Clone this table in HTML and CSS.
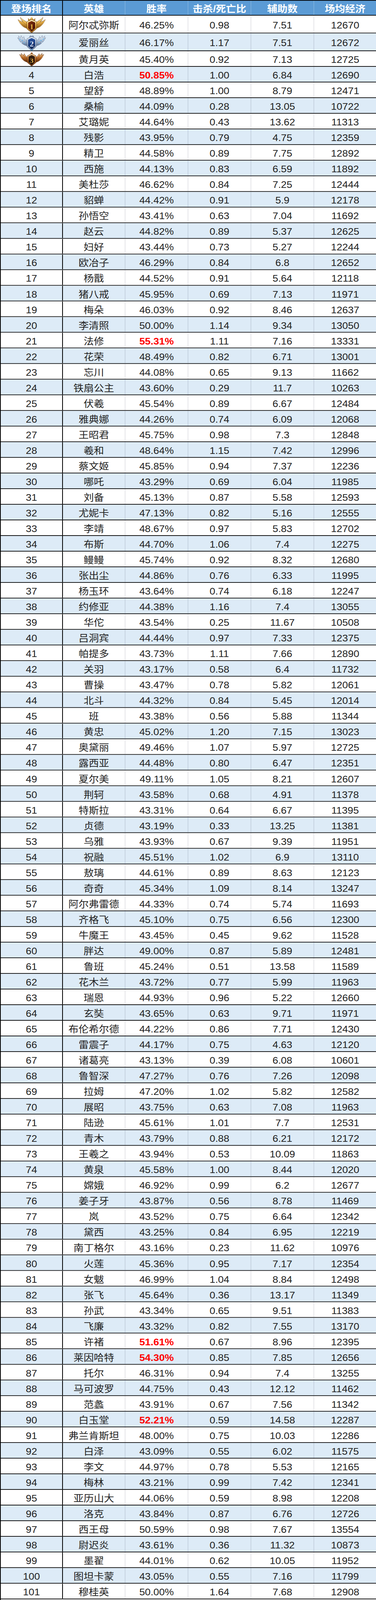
FILE: index.html
```html
<!DOCTYPE html>
<html lang="zh-CN">
<head>
<meta charset="utf-8">
<title>英雄数据排名</title>
<link rel="stylesheet" href="styles.css">
</head>
<body>
<div class="frame">
<div class="sheet">
  <div class="row head">
    <div class="c">登场排名</div><div class="c">英雄</div><div class="c">胜率</div><div class="c">击杀/死亡比</div><div class="c">辅助数</div><div class="c">场均经济</div>
  </div>
  <div class="rows">
    <div class="row tall"><div class="c medal-cell">
      <svg class="medal" viewBox="0 0 74 48" width="74" height="48">
        <defs>
          <linearGradient id="g1" x1="0" y1="0" x2="0" y2="1"><stop offset="0" stop-color="#fff6c8"/><stop offset=".45" stop-color="#e9b24a"/><stop offset="1" stop-color="#8a5312"/></linearGradient>
          <linearGradient id="g1s" x1="0" y1="0" x2="1" y2="1"><stop offset="0" stop-color="#8a3410"/><stop offset="1" stop-color="#3a0f04"/></linearGradient>
        </defs>
        <g>
          <path d="M27 34 C18 33 8 25 2 9 C7 13 11 15 15 16 C11 12 9 8 8 3 C14 9 18 12 22 14 L27 20 Z" fill="url(#g1)" stroke="#7a4a10" stroke-width=".8"/>
          <path d="M26 30 C18 28 12 22 7 14 M25 25 C19 22 15 17 12 10" fill="none" stroke="#8a5a14" stroke-width=".7"/>
        </g>
        <g transform="translate(74 0) scale(-1 1)">
          <path d="M27 34 C18 33 8 25 2 9 C7 13 11 15 15 16 C11 12 9 8 8 3 C14 9 18 12 22 14 L27 20 Z" fill="url(#g1)" stroke="#7a4a10" stroke-width=".8"/>
          <path d="M26 30 C18 28 12 22 7 14 M25 25 C19 22 15 17 12 10" fill="none" stroke="#8a5a14" stroke-width=".7"/>
        </g>
        <path d="M29 14 L28 6 L32.5 10 L37 1.5 L41.5 10 L46 6 L45 14 Z" fill="url(#g1)" stroke="#8a5a14" stroke-width=".8"/>
        <circle cx="37" cy="2.5" r="1.6" fill="#fff2b0"/>
        <path d="M37 9 L49.5 15 L49.5 35 L37 46.5 L24.5 35 L24.5 15 Z" fill="url(#g1)" stroke="#6a3a08" stroke-width=".9"/>
        <path d="M37 13 L46 17.5 L46 33.5 L37 42.5 L28 33.5 L28 17.5 Z" fill="url(#g1s)"/>
        <text x="37" y="36" text-anchor="middle" class="mnum" font-size="21" fill="#f6c453" stroke="#6a3a08" stroke-width=".6">1</text>
      </svg>
    </div><div class="c">阿尔忒弥斯</div><div class="c">46.25%</div><div class="c">0.98</div><div class="c">7.51</div><div class="c">12670</div></div>
    <div class="row tall"><div class="c medal-cell">
      <svg class="medal" viewBox="0 0 78 48" width="78" height="48">
        <defs>
          <linearGradient id="g2" x1="0" y1="0" x2="0" y2="1"><stop offset="0" stop-color="#f4f8fc"/><stop offset=".5" stop-color="#a9bdd4"/><stop offset="1" stop-color="#5a7090"/></linearGradient>
          <linearGradient id="g2s" x1="0" y1="0" x2="0" y2="1"><stop offset="0" stop-color="#2b58a8"/><stop offset="1" stop-color="#0d2250"/></linearGradient>
        </defs>
        <g>
          <path d="M28 33 C20 32 10 26 3 10 L7 12 L5 5 L11 10 L12 4 L16 11 L19 7 L21 14 L28 19 Z" fill="url(#g2)" stroke="#5a6f8e" stroke-width=".7"/>
          <circle cx="9" cy="14" r="1.5" fill="#4fb0f0"/><circle cx="15" cy="18" r="1.3" fill="#4fb0f0"/><circle cx="20" cy="24" r="1.3" fill="#6cc4ff"/><circle cx="13" cy="24" r="1.1" fill="#e8f4ff"/>
        </g>
        <g transform="translate(78 0) scale(-1 1)">
          <path d="M28 33 C20 32 10 26 3 10 L7 12 L5 5 L11 10 L12 4 L16 11 L19 7 L21 14 L28 19 Z" fill="url(#g2)" stroke="#5a6f8e" stroke-width=".7"/>
          <circle cx="9" cy="14" r="1.5" fill="#4fb0f0"/><circle cx="15" cy="18" r="1.3" fill="#4fb0f0"/><circle cx="20" cy="24" r="1.3" fill="#6cc4ff"/><circle cx="13" cy="24" r="1.1" fill="#e8f4ff"/>
        </g>
        <path d="M33 8 L36 3 L39 6 L42 3 L45 8 Z" fill="url(#g2)" stroke="#5a6f8e" stroke-width=".6"/>
        <path d="M39 7 L51 13 L51 35 L39 46.5 L27 35 L27 13 Z" fill="url(#g2)" stroke="#4a5a78" stroke-width=".9"/>
        <path d="M39 11 L48 15.5 L48 33.5 L39 42.5 L30 33.5 L30 15.5 Z" fill="url(#g2s)"/>
        <circle cx="39" cy="45" r="2" fill="#5ab8f5"/>
        <text x="39" y="35" text-anchor="middle" class="mnum" font-size="21" fill="#eef4ff" stroke="#5a7ab0" stroke-width=".5">2</text>
      </svg>
    </div><div class="c">爱丽丝</div><div class="c">46.17%</div><div class="c">1.17</div><div class="c">7.51</div><div class="c">12672</div></div>
    <div class="row"><div class="c medal-cell">
      <svg class="medal" viewBox="0 0 66 40" width="66" height="40">
        <defs>
          <linearGradient id="g3" x1="0" y1="0" x2="0" y2="1"><stop offset="0" stop-color="#ffdca6"/><stop offset=".5" stop-color="#c0702a"/><stop offset="1" stop-color="#5a2a08"/></linearGradient>
          <linearGradient id="g3s" x1="0" y1="0" x2="0" y2="1"><stop offset="0" stop-color="#3a2414"/><stop offset="1" stop-color="#140a04"/></linearGradient>
        </defs>
        <g>
          <path d="M23 28 C15 27 7 20 2 6 L7 9 L6 3 L12 9 L14 4 L18 11 L23 15 Z" fill="url(#g3)" stroke="#5a2a08" stroke-width=".8"/>
          <path d="M22 24 C15 22 10 16 7 10 M22 19 C17 17 14 13 12 8" fill="none" stroke="#6a3510" stroke-width=".7"/>
        </g>
        <g transform="translate(66 0) scale(-1 1)">
          <path d="M23 28 C15 27 7 20 2 6 L7 9 L6 3 L12 9 L14 4 L18 11 L23 15 Z" fill="url(#g3)" stroke="#5a2a08" stroke-width=".8"/>
          <path d="M22 24 C15 22 10 16 7 10 M22 19 C17 17 14 13 12 8" fill="none" stroke="#6a3510" stroke-width=".7"/>
        </g>
        <circle cx="33" cy="3" r="2.4" fill="url(#g3)" stroke="#5a2a08" stroke-width=".6"/>
        <path d="M33 4 L44 10 L44 29 L33 39 L22 29 L22 10 Z" fill="url(#g3)" stroke="#4a2206" stroke-width=".9"/>
        <path d="M33 8 L41 12 L41 27.5 L33 35.5 L25 27.5 L25 12 Z" fill="url(#g3s)"/>
        <text x="33" y="30" text-anchor="middle" class="mnum" font-size="19" fill="#f2c458" stroke="#6a4010" stroke-width=".5">3</text>
      </svg>
    </div><div class="c">黄月英</div><div class="c">45.40%</div><div class="c">0.92</div><div class="c">7.13</div><div class="c">12725</div></div>
    <div class="row"><div class="c">4</div><div class="c">白浩</div><div class="c hot">50.85%</div><div class="c">1.00</div><div class="c">6.84</div><div class="c">12690</div></div>
    <div class="row"><div class="c">5</div><div class="c">望舒</div><div class="c">48.89%</div><div class="c">1.00</div><div class="c">8.79</div><div class="c">12471</div></div>
    <div class="row"><div class="c">6</div><div class="c">桑榆</div><div class="c">44.09%</div><div class="c">0.28</div><div class="c">13.05</div><div class="c">10722</div></div>
    <div class="row"><div class="c">7</div><div class="c">艾璐妮</div><div class="c">44.64%</div><div class="c">0.43</div><div class="c">13.62</div><div class="c">11313</div></div>
    <div class="row"><div class="c">8</div><div class="c">残影</div><div class="c">43.95%</div><div class="c">0.79</div><div class="c">4.75</div><div class="c">12359</div></div>
    <div class="row"><div class="c">9</div><div class="c">精卫</div><div class="c">44.58%</div><div class="c">0.89</div><div class="c">7.75</div><div class="c">12892</div></div>
    <div class="row"><div class="c">10</div><div class="c">西施</div><div class="c">44.13%</div><div class="c">0.83</div><div class="c">6.59</div><div class="c">11892</div></div>
    <div class="row"><div class="c">11</div><div class="c">美杜莎</div><div class="c">46.62%</div><div class="c">0.84</div><div class="c">7.25</div><div class="c">12444</div></div>
    <div class="row"><div class="c">12</div><div class="c">貂蝉</div><div class="c">44.42%</div><div class="c">0.91</div><div class="c">5.9</div><div class="c">12178</div></div>
    <div class="row"><div class="c">13</div><div class="c">孙悟空</div><div class="c">43.41%</div><div class="c">0.63</div><div class="c">7.04</div><div class="c">11692</div></div>
    <div class="row"><div class="c">14</div><div class="c">赵云</div><div class="c">44.82%</div><div class="c">0.89</div><div class="c">5.37</div><div class="c">12625</div></div>
    <div class="row"><div class="c">15</div><div class="c">妇好</div><div class="c">43.44%</div><div class="c">0.73</div><div class="c">5.27</div><div class="c">12244</div></div>
    <div class="row"><div class="c">16</div><div class="c">欧冶子</div><div class="c">46.29%</div><div class="c">0.84</div><div class="c">6.8</div><div class="c">12652</div></div>
    <div class="row"><div class="c">17</div><div class="c">杨戬</div><div class="c">44.52%</div><div class="c">0.91</div><div class="c">5.64</div><div class="c">12118</div></div>
    <div class="row"><div class="c">18</div><div class="c">猪八戒</div><div class="c">45.95%</div><div class="c">0.69</div><div class="c">7.13</div><div class="c">11971</div></div>
    <div class="row"><div class="c">19</div><div class="c">梅朵</div><div class="c">46.03%</div><div class="c">0.92</div><div class="c">8.46</div><div class="c">12637</div></div>
    <div class="row"><div class="c">20</div><div class="c">李清照</div><div class="c">50.00%</div><div class="c">1.14</div><div class="c">9.34</div><div class="c">13050</div></div>
    <div class="row"><div class="c">21</div><div class="c">法修</div><div class="c hot">55.31%</div><div class="c">1.11</div><div class="c">7.16</div><div class="c">13331</div></div>
    <div class="row"><div class="c">22</div><div class="c">花荣</div><div class="c">48.49%</div><div class="c">0.82</div><div class="c">6.71</div><div class="c">13001</div></div>
    <div class="row"><div class="c">23</div><div class="c">忘川</div><div class="c">44.08%</div><div class="c">0.65</div><div class="c">9.13</div><div class="c">11662</div></div>
    <div class="row"><div class="c">24</div><div class="c">铁扇公主</div><div class="c">43.60%</div><div class="c">0.29</div><div class="c">11.7</div><div class="c">10263</div></div>
    <div class="row"><div class="c">25</div><div class="c">伏羲</div><div class="c">45.54%</div><div class="c">0.89</div><div class="c">6.67</div><div class="c">12484</div></div>
    <div class="row"><div class="c">26</div><div class="c">雅典娜</div><div class="c">44.26%</div><div class="c">0.74</div><div class="c">6.09</div><div class="c">12068</div></div>
    <div class="row"><div class="c">27</div><div class="c">王昭君</div><div class="c">45.75%</div><div class="c">0.98</div><div class="c">7.3</div><div class="c">12848</div></div>
    <div class="row"><div class="c">28</div><div class="c">羲和</div><div class="c">48.64%</div><div class="c">1.15</div><div class="c">7.42</div><div class="c">12996</div></div>
    <div class="row"><div class="c">29</div><div class="c">蔡文姬</div><div class="c">45.85%</div><div class="c">0.94</div><div class="c">7.37</div><div class="c">12236</div></div>
    <div class="row"><div class="c">30</div><div class="c">哪吒</div><div class="c">43.29%</div><div class="c">0.69</div><div class="c">6.04</div><div class="c">11985</div></div>
    <div class="row"><div class="c">31</div><div class="c">刘备</div><div class="c">45.13%</div><div class="c">0.87</div><div class="c">5.58</div><div class="c">12593</div></div>
    <div class="row"><div class="c">32</div><div class="c">尤妮卡</div><div class="c">47.13%</div><div class="c">0.82</div><div class="c">5.16</div><div class="c">12555</div></div>
    <div class="row"><div class="c">33</div><div class="c">李靖</div><div class="c">48.67%</div><div class="c">0.97</div><div class="c">5.83</div><div class="c">12702</div></div>
    <div class="row"><div class="c">34</div><div class="c">布斯</div><div class="c">44.70%</div><div class="c">1.06</div><div class="c">7.4</div><div class="c">12275</div></div>
    <div class="row"><div class="c">35</div><div class="c">鳗鳗</div><div class="c">45.74%</div><div class="c">0.92</div><div class="c">8.32</div><div class="c">12680</div></div>
    <div class="row"><div class="c">36</div><div class="c">张出尘</div><div class="c">44.86%</div><div class="c">0.76</div><div class="c">6.33</div><div class="c">11995</div></div>
    <div class="row"><div class="c">37</div><div class="c">杨玉环</div><div class="c">43.64%</div><div class="c">0.74</div><div class="c">6.18</div><div class="c">12247</div></div>
    <div class="row"><div class="c">38</div><div class="c">约修亚</div><div class="c">44.38%</div><div class="c">1.16</div><div class="c">7.4</div><div class="c">13055</div></div>
    <div class="row"><div class="c">39</div><div class="c">华佗</div><div class="c">43.54%</div><div class="c">0.25</div><div class="c">11.67</div><div class="c">10508</div></div>
    <div class="row"><div class="c">40</div><div class="c">吕洞宾</div><div class="c">44.44%</div><div class="c">0.97</div><div class="c">7.33</div><div class="c">12375</div></div>
    <div class="row"><div class="c">41</div><div class="c">帕提多</div><div class="c">43.73%</div><div class="c">1.11</div><div class="c">7.66</div><div class="c">12890</div></div>
    <div class="row"><div class="c">42</div><div class="c">关羽</div><div class="c">43.17%</div><div class="c">0.58</div><div class="c">6.4</div><div class="c">11732</div></div>
    <div class="row"><div class="c">43</div><div class="c">曹操</div><div class="c">43.47%</div><div class="c">0.78</div><div class="c">5.82</div><div class="c">12061</div></div>
    <div class="row"><div class="c">44</div><div class="c">北斗</div><div class="c">44.32%</div><div class="c">0.84</div><div class="c">5.45</div><div class="c">12014</div></div>
    <div class="row"><div class="c">45</div><div class="c">班</div><div class="c">43.38%</div><div class="c">0.56</div><div class="c">5.88</div><div class="c">11344</div></div>
    <div class="row"><div class="c">46</div><div class="c">黄忠</div><div class="c">45.02%</div><div class="c">1.20</div><div class="c">7.15</div><div class="c">13023</div></div>
    <div class="row"><div class="c">47</div><div class="c">奥黛丽</div><div class="c">49.46%</div><div class="c">1.07</div><div class="c">5.97</div><div class="c">12725</div></div>
    <div class="row"><div class="c">48</div><div class="c">露西亚</div><div class="c">44.48%</div><div class="c">0.80</div><div class="c">6.47</div><div class="c">12351</div></div>
    <div class="row"><div class="c">49</div><div class="c">夏尔美</div><div class="c">49.11%</div><div class="c">1.05</div><div class="c">8.21</div><div class="c">12607</div></div>
    <div class="row"><div class="c">50</div><div class="c">荆轲</div><div class="c">43.58%</div><div class="c">0.68</div><div class="c">4.91</div><div class="c">11378</div></div>
    <div class="row"><div class="c">51</div><div class="c">特斯拉</div><div class="c">43.31%</div><div class="c">0.64</div><div class="c">6.67</div><div class="c">11395</div></div>
    <div class="row"><div class="c">52</div><div class="c">贞德</div><div class="c">43.19%</div><div class="c">0.33</div><div class="c">13.25</div><div class="c">11381</div></div>
    <div class="row"><div class="c">53</div><div class="c">乌雅</div><div class="c">43.93%</div><div class="c">0.67</div><div class="c">9.39</div><div class="c">11951</div></div>
    <div class="row"><div class="c">54</div><div class="c">祝融</div><div class="c">45.51%</div><div class="c">1.02</div><div class="c">6.9</div><div class="c">13110</div></div>
    <div class="row"><div class="c">55</div><div class="c">敖璃</div><div class="c">44.61%</div><div class="c">0.89</div><div class="c">8.63</div><div class="c">12123</div></div>
    <div class="row"><div class="c">56</div><div class="c">奇奇</div><div class="c">45.34%</div><div class="c">1.09</div><div class="c">8.14</div><div class="c">13247</div></div>
    <div class="row"><div class="c">57</div><div class="c">阿尔弗雷德</div><div class="c">44.33%</div><div class="c">0.74</div><div class="c">5.74</div><div class="c">11693</div></div>
    <div class="row"><div class="c">58</div><div class="c">齐格飞</div><div class="c">45.10%</div><div class="c">0.75</div><div class="c">6.56</div><div class="c">12300</div></div>
    <div class="row"><div class="c">59</div><div class="c">牛魔王</div><div class="c">43.45%</div><div class="c">0.45</div><div class="c">9.62</div><div class="c">11528</div></div>
    <div class="row"><div class="c">60</div><div class="c">胖达</div><div class="c">49.00%</div><div class="c">0.87</div><div class="c">5.89</div><div class="c">12481</div></div>
    <div class="row"><div class="c">61</div><div class="c">鲁班</div><div class="c">45.24%</div><div class="c">0.51</div><div class="c">13.58</div><div class="c">11589</div></div>
    <div class="row"><div class="c">62</div><div class="c">花木兰</div><div class="c">43.72%</div><div class="c">0.77</div><div class="c">5.99</div><div class="c">11963</div></div>
    <div class="row"><div class="c">63</div><div class="c">瑞恩</div><div class="c">44.93%</div><div class="c">0.96</div><div class="c">5.22</div><div class="c">12660</div></div>
    <div class="row"><div class="c">64</div><div class="c">玄奘</div><div class="c">43.65%</div><div class="c">0.63</div><div class="c">9.71</div><div class="c">11971</div></div>
    <div class="row"><div class="c">65</div><div class="c">布伦希尔德</div><div class="c">44.22%</div><div class="c">0.86</div><div class="c">7.71</div><div class="c">12430</div></div>
    <div class="row"><div class="c">66</div><div class="c">雷震子</div><div class="c">44.17%</div><div class="c">0.75</div><div class="c">4.63</div><div class="c">12120</div></div>
    <div class="row"><div class="c">67</div><div class="c">诸葛亮</div><div class="c">43.13%</div><div class="c">0.39</div><div class="c">6.08</div><div class="c">10601</div></div>
    <div class="row"><div class="c">68</div><div class="c">鲁智深</div><div class="c">47.27%</div><div class="c">0.76</div><div class="c">7.26</div><div class="c">12098</div></div>
    <div class="row"><div class="c">69</div><div class="c">拉姆</div><div class="c">47.20%</div><div class="c">1.02</div><div class="c">5.82</div><div class="c">12582</div></div>
    <div class="row"><div class="c">70</div><div class="c">展昭</div><div class="c">43.75%</div><div class="c">0.63</div><div class="c">7.08</div><div class="c">11963</div></div>
    <div class="row"><div class="c">71</div><div class="c">陆逊</div><div class="c">45.61%</div><div class="c">1.01</div><div class="c">7.7</div><div class="c">12531</div></div>
    <div class="row"><div class="c">72</div><div class="c">青木</div><div class="c">43.79%</div><div class="c">0.88</div><div class="c">6.21</div><div class="c">12172</div></div>
    <div class="row"><div class="c">73</div><div class="c">王羲之</div><div class="c">43.94%</div><div class="c">0.53</div><div class="c">10.09</div><div class="c">11863</div></div>
    <div class="row"><div class="c">74</div><div class="c">黄泉</div><div class="c">45.58%</div><div class="c">1.00</div><div class="c">8.44</div><div class="c">12020</div></div>
    <div class="row"><div class="c">75</div><div class="c">嫦娥</div><div class="c">46.92%</div><div class="c">0.99</div><div class="c">6.2</div><div class="c">12677</div></div>
    <div class="row"><div class="c">76</div><div class="c">姜子牙</div><div class="c">43.87%</div><div class="c">0.56</div><div class="c">8.78</div><div class="c">11469</div></div>
    <div class="row"><div class="c">77</div><div class="c">岚</div><div class="c">43.52%</div><div class="c">0.75</div><div class="c">6.64</div><div class="c">12342</div></div>
    <div class="row"><div class="c">78</div><div class="c">黛西</div><div class="c">43.25%</div><div class="c">0.84</div><div class="c">6.95</div><div class="c">12219</div></div>
    <div class="row"><div class="c">79</div><div class="c">南丁格尔</div><div class="c">43.16%</div><div class="c">0.23</div><div class="c">11.62</div><div class="c">10976</div></div>
    <div class="row"><div class="c">80</div><div class="c">火莲</div><div class="c">45.36%</div><div class="c">0.95</div><div class="c">7.17</div><div class="c">12354</div></div>
    <div class="row"><div class="c">81</div><div class="c">女魃</div><div class="c">46.99%</div><div class="c">1.04</div><div class="c">8.84</div><div class="c">12498</div></div>
    <div class="row"><div class="c">82</div><div class="c">张飞</div><div class="c">45.64%</div><div class="c">0.36</div><div class="c">13.17</div><div class="c">11349</div></div>
    <div class="row"><div class="c">83</div><div class="c">孙武</div><div class="c">43.34%</div><div class="c">0.65</div><div class="c">9.51</div><div class="c">11383</div></div>
    <div class="row"><div class="c">84</div><div class="c">飞廉</div><div class="c">43.32%</div><div class="c">0.82</div><div class="c">7.55</div><div class="c">13170</div></div>
    <div class="row"><div class="c">85</div><div class="c">许褚</div><div class="c hot">51.61%</div><div class="c">0.67</div><div class="c">8.96</div><div class="c">12395</div></div>
    <div class="row"><div class="c">86</div><div class="c">莱因哈特</div><div class="c hot">54.30%</div><div class="c">0.85</div><div class="c">7.85</div><div class="c">12656</div></div>
    <div class="row"><div class="c">87</div><div class="c">托尔</div><div class="c">46.31%</div><div class="c">0.94</div><div class="c">7.4</div><div class="c">13255</div></div>
    <div class="row"><div class="c">88</div><div class="c">马可波罗</div><div class="c">44.75%</div><div class="c">0.43</div><div class="c">12.12</div><div class="c">11462</div></div>
    <div class="row"><div class="c">89</div><div class="c">范蠡</div><div class="c">43.91%</div><div class="c">0.67</div><div class="c">7.56</div><div class="c">11342</div></div>
    <div class="row"><div class="c">90</div><div class="c">白玉堂</div><div class="c hot">52.21%</div><div class="c">0.59</div><div class="c">14.58</div><div class="c">12287</div></div>
    <div class="row"><div class="c">91</div><div class="c">弗兰肯斯坦</div><div class="c">48.00%</div><div class="c">0.75</div><div class="c">10.03</div><div class="c">12286</div></div>
    <div class="row"><div class="c">92</div><div class="c">白泽</div><div class="c">43.09%</div><div class="c">0.55</div><div class="c">6.02</div><div class="c">11575</div></div>
    <div class="row"><div class="c">93</div><div class="c">李文</div><div class="c">44.97%</div><div class="c">0.78</div><div class="c">5.53</div><div class="c">12165</div></div>
    <div class="row"><div class="c">94</div><div class="c">梅林</div><div class="c">43.21%</div><div class="c">0.99</div><div class="c">7.42</div><div class="c">12341</div></div>
    <div class="row"><div class="c">95</div><div class="c">亚历山大</div><div class="c">44.06%</div><div class="c">0.59</div><div class="c">8.98</div><div class="c">12208</div></div>
    <div class="row"><div class="c">96</div><div class="c">洛克</div><div class="c">43.84%</div><div class="c">0.87</div><div class="c">6.76</div><div class="c">12726</div></div>
    <div class="row"><div class="c">97</div><div class="c">西王母</div><div class="c">50.59%</div><div class="c">0.98</div><div class="c">7.67</div><div class="c">13554</div></div>
    <div class="row"><div class="c">98</div><div class="c">尉迟炎</div><div class="c">43.61%</div><div class="c">0.36</div><div class="c">11.32</div><div class="c">10873</div></div>
    <div class="row"><div class="c">99</div><div class="c">墨翟</div><div class="c">44.01%</div><div class="c">0.62</div><div class="c">10.05</div><div class="c">11952</div></div>
    <div class="row"><div class="c">100</div><div class="c">图坦卡蒙</div><div class="c">43.05%</div><div class="c">0.55</div><div class="c">7.16</div><div class="c">11799</div></div>
    <div class="row"><div class="c">101</div><div class="c">穆桂英</div><div class="c">50.00%</div><div class="c">1.64</div><div class="c">7.68</div><div class="c">12908</div></div>
  </div>
</div>
</div>
<script src="app.js"></script>
</body>
</html>
```
FILE: styles.css
```css
*, *::before, *::after {
  box-sizing: border-box;
}

html, body {
  margin: 0;
  padding: 0;
  background: #ffffff;
}

body {
  font-family: "Liberation Sans", "Noto Sans CJK SC", sans-serif;
  color: #222222;
  overflow: hidden;
}

/* the frame is the visible window; the sheet is designed for a 4502px tall frame
   and is fitted to the real window height through --fit (set by app.js) */
.frame {
  width: 100%;
  height: 100vh;
  overflow: hidden;
}

.sheet {
  width: 962px;
  height: 4502px;
  border-left: 2px solid #000000;
  transform: scaleY(var(--fit, 1));
  transform-origin: 0 0;
}

.row {
  display: grid;
  grid-template-columns: 159px 160px 161px 161px 161px 1fr;
  grid-template-rows: 42px;
  height: 44px;
  overflow: hidden;
  border-bottom: 2px solid #000000;
  background: #ffffff;
}

.rows .row:nth-child(even) {
  background: #ddebf7;
}

.row.tall {
  grid-template-rows: 48px;
  height: 50px;
}

.head {
  grid-template-rows: 40px;
  background: #5b9bd5;
  border-top: 2px solid #000000;
  color: #ffffff;
  font-weight: bold;
}

.c {
  display: flex;
  align-items: center;
  justify-content: center;
  height: 100%;
  min-height: 0;
  overflow: hidden;
  padding-top: 6px;
  line-height: 30px;
  font-size: 26px;
  white-space: nowrap;
  border-right: 2px solid rgba(0, 0, 40, 0.1);
}

.c:first-child {
  border-right-color: #000000;
}

.c:last-child {
  border-right: 0;
}

.head .c {
  border-right-color: rgba(255, 255, 255, 0.18);
}

.head .c:first-child {
  border-right-color: #000000;
}

.hot {
  color: #ff0000;
  font-weight: bold;
}

.medal-cell {
  padding-top: 3px;
}

.medal {
  display: block;
  flex: none;
}

.mnum {
  font-family: "Liberation Serif", serif;
  font-weight: bold;
}
```
FILE: app.js
```js
(function () {
  var designHeight = 4502;
  var fit = Math.min(1, window.innerHeight / designHeight);
  document.documentElement.style.setProperty('--fit', String(fit));
})();
```
